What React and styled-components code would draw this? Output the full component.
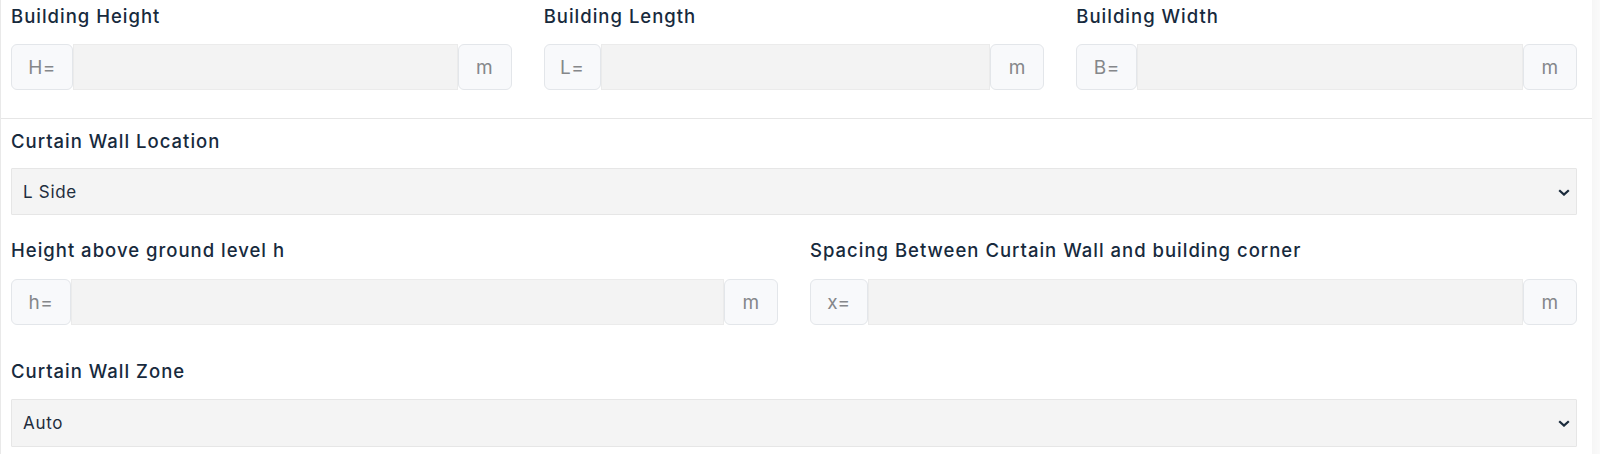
import styled, { createGlobalStyle } from "styled-components"

const GlobalStyle = createGlobalStyle`
    html, body {
        margin: 0;
        padding: 0;
        background: #ffffff;
    }
    body {
        font-family: Inter, "Open Sans", "Liberation Sans", sans-serif;
        color: #1b2b3c;
    }
`

const Page = styled.div`
    display: flex;
    width: 1600px;
    height: 454px;
    overflow: hidden;
`

const Panel = styled.div`
    flex: 1;
    border-left: 1px solid #e9e9e9;
    padding-top: 4px;
`

const ScrollEdge = styled.div`
    width: 8px;
    background: linear-gradient(to right, #f6f6f6, #fafafa);
`

const Section = styled.div`
    padding: 0 15px 0 10px;
`

const Grid = styled.div`
    display: grid;
    grid-template-columns: repeat(${p => p.cols}, 1fr);
    column-gap: 32px;
`

const Field = styled.div`
    display: flex;
    flex-direction: column;
    margin-top: ${p => p.top || 0}px;
`

const Label = styled.label`
    font-size: 18.5px;
    font-weight: 500;
    line-height: 24px;
    color: #172a3d;
    letter-spacing: 1px;
    margin-bottom: ${p => p.gap || 16}px;
    white-space: nowrap;
`

const InputGroup = styled.div`
    display: flex;
    height: 46px;
`

const Addon = styled.span`
    display: flex;
    align-items: center;
    justify-content: center;
    flex: none;
    width: ${p => p.w}px;
    box-sizing: border-box;
    background: #f8f9fb;
    border: 1px solid #e3e6ea;
    border-radius: 6px;
    font-size: 19px;
    letter-spacing: 0.5px;
    color: #85878a;
`

const Input = styled.input`
    flex: 1;
    min-width: 0;
    background: #f3f3f3;
    border: 1px solid #ebebeb;
    border-radius: 0;
    outline: none;
    font: inherit;
`

const Divider = styled.hr`
    border: none;
    border-top: 1px solid #e6e6e6;
    margin: 28px 0 10px 0;
`

const SelectWrap = styled.div`
    position: relative;
    height: ${p => p.h || 46}px;
`

const Select = styled.select`
    appearance: none;
    width: 100%;
    height: 100%;
    background: #f4f4f4;
    border: 1px solid #e6e6e6;
    border-radius: 1px;
    padding: 0 11px;
    font-family: Inter, "Open Sans", "Liberation Sans", sans-serif;
    font-size: 17px;
    letter-spacing: 0.7px;
    color: #1f2d3d;
    outline: none;
`

const Chevron = styled.svg`
    position: absolute;
    right: 7px;
    top: 50%;
    margin-top: -3px;
    pointer-events: none;
`

const UnitInput = ({ prefix, w }) => (
    <InputGroup>
        <Addon w={w}>{prefix}</Addon>
        <Input type="text" />
        <Addon w={54}>m</Addon>
    </InputGroup>
)

const DropDown = ({ value, options, h }) => (
    <SelectWrap h={h}>
        <Select defaultValue={value}>
            {options.map((o) => <option key={o}>{o}</option>)}
        </Select>
        <Chevron width="12" height="7" viewBox="0 0 12 7">
            <polyline points="1.2,1.2 6,5.6 10.8,1.2" fill="none" stroke="#1b2b3c" strokeWidth="2.2" />
        </Chevron>
    </SelectWrap>
)

const App = () => {
    return (
        <Page>
            <GlobalStyle />
            <Panel>
                <Section>
                    <Grid cols={3}>
                        <Field>
                            <Label>Building Height</Label>
                            <UnitInput prefix="H=" w={62} />
                        </Field>
                        <Field>
                            <Label>Building Length</Label>
                            <UnitInput prefix="L=" w={57} />
                        </Field>
                        <Field>
                            <Label>Building Width</Label>
                            <UnitInput prefix="B=" w={61} />
                        </Field>
                    </Grid>
                </Section>
                <Divider />
                <Section>
                    <Field>
                        <Label gap={15}>Curtain Wall Location</Label>
                        <DropDown value="L Side" options={["L Side", "B Side"]} h={47} />
                    </Field>
                    <Grid cols={2}>
                        <Field top={23}>
                            <Label gap={17}>Height above ground level h</Label>
                            <UnitInput prefix="h=" w={60} />
                        </Field>
                        <Field top={23}>
                            <Label gap={17}>Spacing Between Curtain Wall and building corner</Label>
                            <UnitInput prefix="x=" w={58} />
                        </Field>
                    </Grid>
                    <Field top={34}>
                        <Label gap={16}>Curtain Wall Zone</Label>
                        <DropDown value="Auto" options={["Auto", "Zone 4", "Zone 5"]} h={48} />
                    </Field>
                </Section>
            </Panel>
            <ScrollEdge />
        </Page>
    )
}

export default App
